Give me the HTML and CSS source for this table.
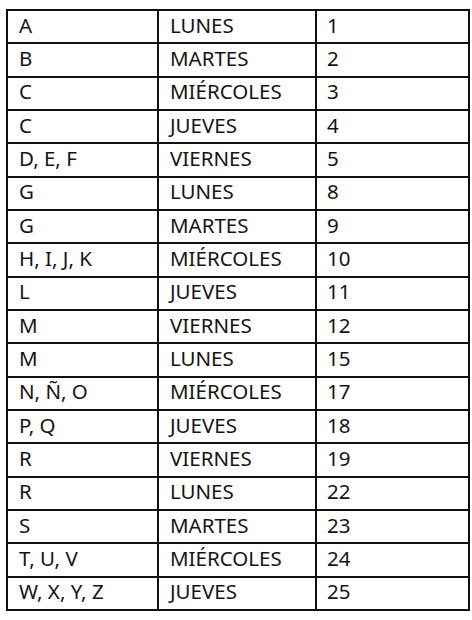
FILE: index.html
```html
<!DOCTYPE html>
<html lang="es">
<head>
<meta charset="utf-8">
<link rel="stylesheet" href="styles.css">
</head>
<body>
<table class="sched">
<colgroup><col class="c1"><col class="c2"><col class="c3"></colgroup>
<tbody>
<tr><td>A</td><td>LUNES</td><td>1</td></tr>
<tr><td>B</td><td>MARTES</td><td>2</td></tr>
<tr><td>C</td><td>MIÉRCOLES</td><td>3</td></tr>
<tr><td>C</td><td>JUEVES</td><td>4</td></tr>
<tr><td>D, E, F</td><td>VIERNES</td><td>5</td></tr>
<tr><td>G</td><td>LUNES</td><td>8</td></tr>
<tr><td>G</td><td>MARTES</td><td>9</td></tr>
<tr><td>H, I, J, K</td><td>MIÉRCOLES</td><td>10</td></tr>
<tr><td>L</td><td>JUEVES</td><td>11</td></tr>
<tr><td>M</td><td>VIERNES</td><td>12</td></tr>
<tr><td>M</td><td>LUNES</td><td>15</td></tr>
<tr><td>N, Ñ, O</td><td>MIÉRCOLES</td><td>17</td></tr>
<tr><td>P, Q</td><td>JUEVES</td><td>18</td></tr>
<tr><td>R</td><td>VIERNES</td><td>19</td></tr>
<tr><td>R</td><td>LUNES</td><td>22</td></tr>
<tr><td>S</td><td>MARTES</td><td>23</td></tr>
<tr><td>T, U, V</td><td>MIÉRCOLES</td><td>24</td></tr>
<tr><td>W, X, Y, Z</td><td>JUEVES</td><td>25</td></tr>
</tbody>
</table>
</body>
</html>
```
FILE: styles.css
```css
html, body {
  margin: 0;
  padding: 0;
  background: #fff;
}
body {
  font-family: "Noto Sans", "Open Sans", sans-serif;
  color: #141414;
}
.sched {
  border-collapse: collapse;
  table-layout: fixed;
  width: 462px;
  height: 602px;
  margin: 9px 0 0 6px;
}
.c1 { width: 151px; }
.c2 { width: 158px; }
.c3 { width: 153px; }
.sched td {
  border: 2px solid #111;
  font-size: 20.5px;
  line-height: 24px;
  padding: 0 0 4px 11px;
  vertical-align: middle;
  white-space: nowrap;
}
.sched td:nth-child(3) { padding-left: 10px; }
```
